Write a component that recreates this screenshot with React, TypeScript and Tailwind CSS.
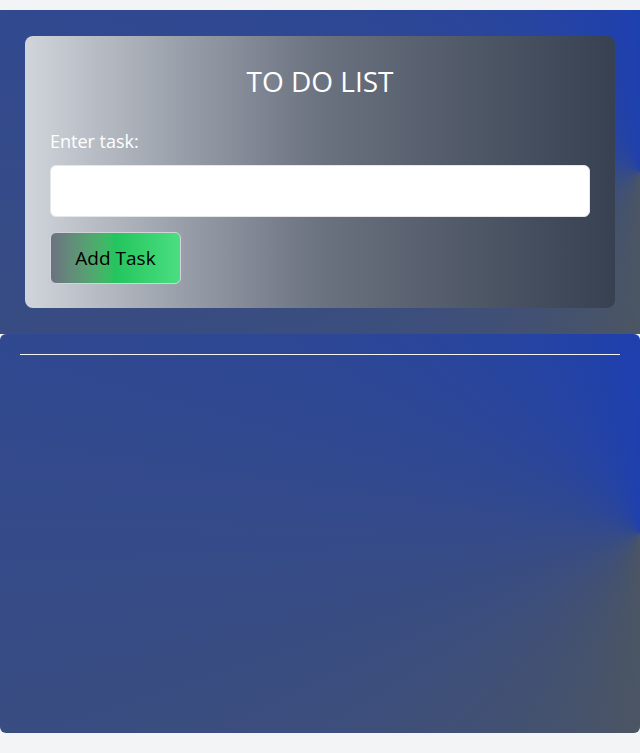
import React from "react";

export default function App() {
  return (
    <div
      className="min-h-[753px] bg-[#f3f4f6] pt-[10px] pb-[20px]"
      style={{ fontFamily: '"Open Sans", "Noto Sans", sans-serif' }}
    >
      <section className="h-[324px] bg-[conic-gradient(at_right,#1e40af,#4b5563,#1e40af)] px-[25px] pt-[26px]">
        <div className="h-[272px] rounded-lg bg-gradient-to-r from-[#d1d5db] via-[#6b7280] to-[#374151] px-[25px] pt-[27px]">
          <h1 className="text-center text-[28px] leading-[36px] text-white">TO DO LIST</h1>
          <label className="mt-[28px] block text-[18px] leading-[28px] text-white">Enter task:</label>
          <input
            type="text"
            className="mt-[10px] block h-[52px] w-full rounded-md border border-[#e5e7eb] bg-white px-3 outline-none"
          />
          <button className="mt-[15px] flex h-[52px] w-[131px] items-center justify-center rounded-md border border-[#d1d5db] bg-gradient-to-r from-[#6b7280] via-[#22c55e] to-[#4ade80] text-[19px] text-black">
            Add Task
          </button>
        </div>
      </section>
      <section className="h-[399px] rounded-md bg-[conic-gradient(at_right,#1e40af,#4b5563,#1e40af)] px-[20px] pt-[20px]">
        <hr className="border-0 border-t border-[#f3f4f6]" />
      </section>
    </div>
  );
}
